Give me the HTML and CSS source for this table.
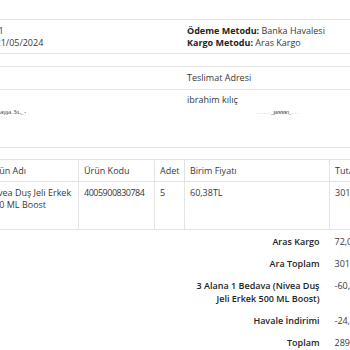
FILE: index.html
```html
<!DOCTYPE html>
<html lang="tr">
<head>
<meta charset="utf-8">
<title>Sipariş Bilgileri</title>
<link rel="stylesheet" href="styles.css">
</head>
<body>
<div class="page">
  <div class="info">
    <table class="tbl info-tbl">
      <colgroup><col class="half"><col class="half"></colgroup>
      <tbody>
        <tr class="details">
          <td><b>Sipariş No:</b> #231<br><b>Sipariş Tarihi:</b> 21/05/2024</td>
          <td><b>Ödeme Metodu:</b> Banka Havalesi<br><b>Kargo Metodu:</b> Aras Kargo</td>
        </tr>
      </tbody>
    </table>
    <table class="tbl info-tbl addr-tbl">
      <colgroup><col class="half"><col class="half"></colgroup>
      <thead>
        <tr><td class="head">Fatura Adresi</td><td class="head">Teslimat Adresi</td></tr>
      </thead>
      <tbody>
        <tr class="addr">
          <td>ibrahim kılıç<br><span class="smudge smudge-left">ıaşşa. 3ıı.._  -</span><br>&nbsp;<br>&nbsp;</td>
          <td>ibrahim kılıç<br><span class="smudge smudge-right">. . . . . . <span class="ink">_ʂɐɐɐɐı_</span> . . .</span><br>&nbsp;<br>&nbsp;</td>
        </tr>
      </tbody>
    </table>
  </div>
  <table class="tbl products">
    <colgroup>
      <col class="c-name"><col class="c-code"><col class="c-qty"><col class="c-price"><col class="c-total">
    </colgroup>
    <thead>
      <tr>
        <td>Ürün Adı</td>
        <td>Ürün Kodu</td>
        <td>Adet</td>
        <td>Birim Fiyatı</td>
        <td>Tutar</td>
      </tr>
    </thead>
    <tbody>
      <tr class="item">
        <td>Nivea Duş Jeli Erkek 500 ML Boost<br>&nbsp;</td>
        <td class="code">4005900830784</td>
        <td>5</td>
        <td>60,38TL</td>
        <td>301,90TL</td>
      </tr>
    </tbody>
    <tfoot>
      <tr><td colspan="3"></td><td class="label">Aras Kargo</td><td class="val">72,00TL</td></tr>
      <tr><td colspan="3"></td><td class="label">Ara Toplam</td><td class="val">301,90TL</td></tr>
      <tr><td colspan="3"></td><td class="label">3 Alana 1 Bedava (Nivea Duş Jeli Erkek 500 ML Boost)</td><td class="val">-60,38TL</td></tr>
      <tr><td colspan="3"></td><td class="label">Havale İndirimi</td><td class="val">-24,15TL</td></tr>
      <tr><td colspan="3"></td><td class="label">Toplam</td><td class="val">289,37TL</td></tr>
    </tfoot>
  </table>
</div>
</body>
</html>
```
FILE: styles.css
```css
* { box-sizing: border-box; }
html, body {
  margin: 0;
  padding: 0;
  overflow: hidden;
  background: #fff;
}
body {
  width: 350px;
  height: 350px;
  font-family: "Open Sans", "Noto Sans", sans-serif;
  font-size: 9px;
  line-height: 12px;
  color: #383838;
}
b { font-weight: 700; color: #242424; }

.tbl {
  border-collapse: collapse;
  table-layout: fixed;
}
.tbl td {
  border: 1px solid #e3e3e3;
  padding: 5px;
  vertical-align: top;
  text-align: left;
}

/* info tables: horizontal rules only */
.info {
  margin-top: 19px;
  margin-left: -73px;
}
.info-tbl {
  width: 510px;
  margin-bottom: 12px;
}
.info-tbl td {
  border-left: 0;
  border-right: 0;
}
.addr-tbl { margin-bottom: 11px; }
.half { width: 255px; }
.details td { padding: 5px 5px 4px; }
.addr td { padding: 4px 5px; }

.smudge {
  font-size: 6px;
  color: #888;
  filter: blur(0.5px);
  letter-spacing: -0.4px;
  vertical-align: 2px;
}
.smudge-left { padding-left: 67px; color: #4a4a4a; }
.smudge-right { padding-left: 70px; color: #aaa; }
.smudge .ink { color: #555; }

/* products */
.products {
  margin-left: -17px;
  width: 416px;
}
.c-name { width: 95px; }
.c-code { width: 76px; }
.c-qty { width: 30px; }
.c-price { width: 145px; }
.c-total { width: 70px; }

.products thead td { padding: 5px 5px 4px; }
.products .item td { padding: 5px 5px 6px; }
.products .code { letter-spacing: -0.5px; }

.products tfoot td {
  border: 0;
  padding: 5px 5px 4px;
  line-height: 13px;
}
.products tfoot .label {
  text-align: right;
  padding-right: 10px;
  font-weight: 600;
  color: #242424;
}
.products tfoot .val { padding-left: 5px; }
```
